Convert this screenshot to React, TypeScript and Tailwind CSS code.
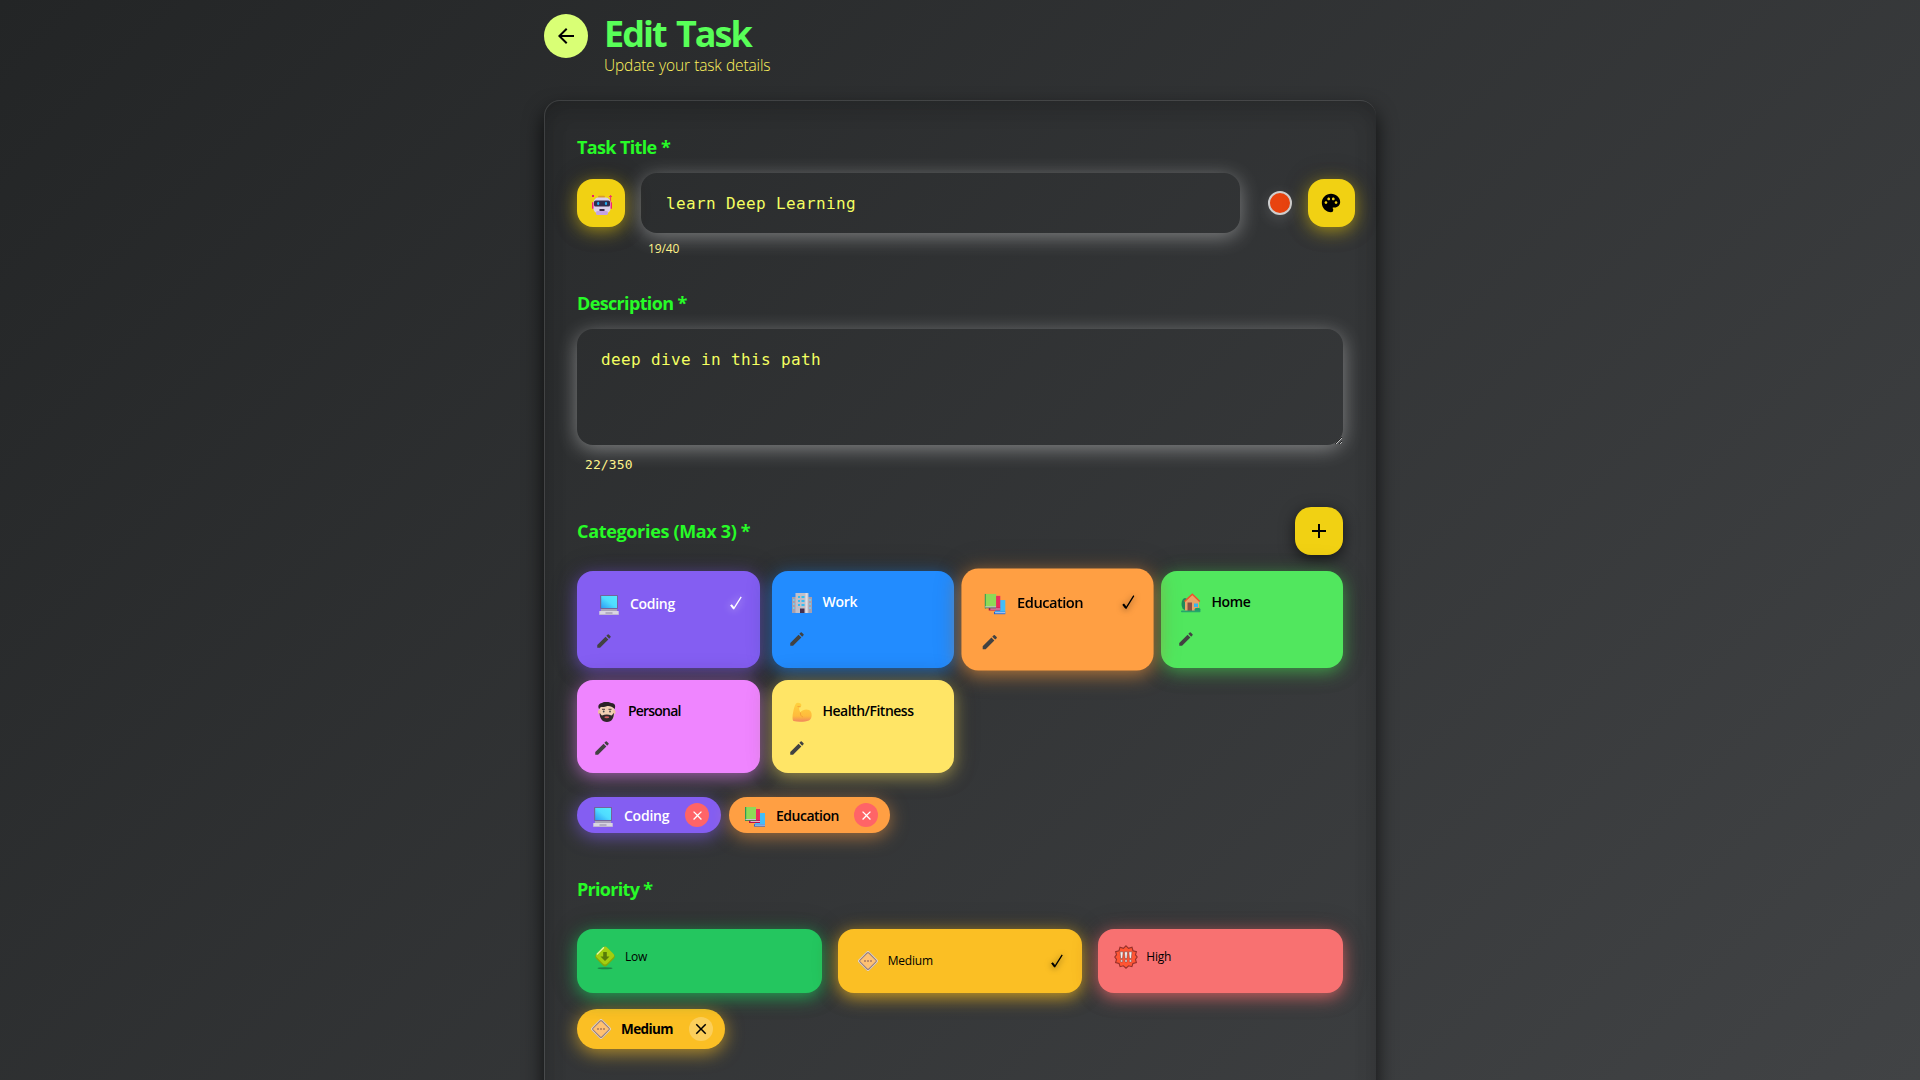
import React from "react";
import { MdAdd, MdArrowBack, MdClose, MdEdit, MdPalette } from "react-icons/md";

function Robot() {
  return (
    <svg width="20" height="20" viewBox="0 0 20 20">
      <rect x="0" y="0" width="2" height="2" fill="#f0186a" />
      <path d="M18.6 0v7M17 1.5h3" stroke="#f0386a" strokeWidth="1" />
      <rect x="0" y="7" width="2" height="7" rx="1" fill="#f5246e" />
      <rect x="18" y="7" width="2" height="7" rx="1" fill="#f5246e" />
      <rect x="6" y="0.8" width="7" height="2.2" rx="1" fill="#d99a2b" />
      <rect x="1.5" y="2.5" width="17" height="16" rx="5" fill="#dcd0ea" />
      <rect x="4" y="16" width="12" height="4" rx="1.6" fill="#c4a3e4" />
      <rect x="2" y="5.5" width="16" height="6" rx="1.6" fill="#322c4c" />
      <ellipse cx="6.2" cy="8.5" rx="1.1" ry="1.8" fill="#1fb0f5" />
      <ellipse cx="14" cy="8.5" rx="1.1" ry="1.8" fill="#1fb0f5" />
      <rect x="7.5" y="14" width="5" height="2" fill="#3a2b4a" />
    </svg>
  );
}

function Laptop() {
  return (
    <svg width="20" height="20" viewBox="0 0 20 20">
      <defs>
        <linearGradient id="screen" x1="1" y1="0" x2="0" y2="1">
          <stop offset="0" stopColor="#56e9ff" />
          <stop offset="0.5" stopColor="#4fdcff" />
          <stop offset="1" stopColor="#2b9cf5" />
        </linearGradient>
      </defs>
      <rect x="1" y="0" width="18" height="14" rx="0.8" fill="#73649a" />
      <rect x="2.2" y="1" width="15.8" height="12" fill="url(#screen)" />
      <path d="M2 14h16v2H2z" fill="#a9a3b8" />
      <rect x="0.3" y="16" width="19.4" height="4" rx="0.6" fill="#d9d5e2" />
      <path d="M6.5 18h7" stroke="#8d84a3" strokeWidth="1" />
      <path d="M0.5 19.8h19" stroke="#9a8fb2" strokeWidth="0.6" />
    </svg>
  );
}

function Office() {
  return (
    <svg width="20" height="20" viewBox="0 0 20 20">
      <rect x="0" y="4" width="20" height="16" fill="#a79fae" />
      <rect x="3.5" y="0" width="13" height="20" fill="#c3bfc8" />
      <rect x="13.5" y="0" width="2" height="20" fill="#e0dde4" />
      <path d="M6 3h2v2H6zM9.5 3h3v2h-3zM6 7h2v2H6zM9.5 7h3v2h-3zM6 11h2v2H6zM9.5 11h3v2h-3z" fill="#35bdf2" />
      <path d="M1 6h1.5v2H1zM1 10h1.5v2H1zM1 14h1.5v2H1zM17.3 6h1.5v2h-1.5zM17.3 10h1.5v2h-1.5zM17.3 14h1.5v2h-1.5z" fill="#6fd0f5" />
      <rect x="8" y="15.5" width="4.5" height="4.5" fill="#43304f" />
    </svg>
  );
}

function Books() {
  return (
    <svg width="20" height="20" viewBox="0 0 20 20">
      <rect x="10" y="6" width="10" height="12" fill="#43bdf8" />
      <path d="M9 17.2h11v2.4H9z" fill="#2466cf" />
      <path d="M10 17.6h10v1H10z" fill="#c9dcf7" />
      <rect x="6" y="2" width="9" height="11.5" fill="#ec2a5e" />
      <path d="M4 13.2h11V16H4z" fill="#b5114e" />
      <path d="M5.500 14h9.500v.9H5.500z" fill="#eec3d8" />
      <rect x="0.500" y="0" width="10.500" height="12.500" fill="#8fd957" />
      <path d="M0 0h1.200v14H0z" fill="#2f9a56" />
      <path d="M0.500 12.200H11v1H.5z" fill="#cfc9f4" />
      <path d="M0.500 13.100H11v.8H.5z" fill="#2f7f4c" />
    </svg>
  );
}

function House() {
  return (
    <svg width="20" height="20" viewBox="0 0 20 20">
      <ellipse cx="4" cy="11" rx="3.500" ry="6" fill="#1f8a5b" />
      <path d="M4 8 11.500 1.500 18 8v10H4z" fill="#e9a368" />
      <path d="M3.500 8.500 11.300 1.300l7.500 7.200" fill="none" stroke="#f0502c" strokeWidth="1.500" />
      <rect x="6.500" y="9.500" width="4.500" height="8.500" fill="#8b4f45" />
      <rect x="13" y="10.500" width="4" height="3.500" fill="#35b6f0" />
      <ellipse cx="16.500" cy="16.800" rx="3" ry="2" fill="#1f9c68" />
      <rect x="0" y="17.600" width="19.500" height="1.600" rx="0.800" fill="#25a56c" />
    </svg>
  );
}

function Beard() {
  return (
    <svg width="20" height="20" viewBox="0 0 20 20">
      <path d="M2 7C0 3 3 1 5 1c3-2 8-1 9 0 4 0 5 3 3.500 6z" fill="#2b2226" />
      <path d="M2.500 6.500C4 4 6 5.500 9 4.500s6 0 8.100 2V13c0 4-3 6-7 6s-7.100-2-7.100-6z" fill="#f2cfb4" />
      <rect x="1" y="8" width="2.500" height="4" rx="1.200" fill="#eebf9f" />
      <rect x="16.300" y="8" width="2.200" height="4" rx="1.100" fill="#eebf9f" />
      <path d="M2.600 11c1 .5 1.400 1.800 2.400 2.600 3-1.400 6.500-1.400 9.500 0 1-.8 1.500-2.100 2.400-2.600 0 5-1.900 8.800-7 9-5-.2-7.300-4-7.300-9z" fill="#30262b" />
      <path d="M5 7.300h3M11.500 7.300h3" stroke="#3b2a2c" strokeWidth="0.900" />
      <circle cx="6.700" cy="9.500" r="0.900" fill="#43464d" />
      <circle cx="13" cy="9.500" r="0.900" fill="#43464d" />
      <ellipse cx="9.800" cy="15.200" rx="2.400" ry="1" fill="#d15a5f" />
    </svg>
  );
}

function Biceps() {
  return (
    <svg width="20" height="20" viewBox="0 0 20 20">
      <defs>
        <linearGradient id="arm" x1="0" y1="0" x2="0" y2="1">
          <stop offset="0" stopColor="#ffd23e" />
          <stop offset="0.700" stopColor="#ffbb3c" />
          <stop offset="1" stopColor="#f0865e" />
        </linearGradient>
      </defs>
      <path d="M4 1.500C5 .3 7 .4 8.500 1.500c1.200 1 1 2.500.2 3.200l-1.400.5c-.5 2 .2 4 1.200 5C11 7 17 6.500 19 10c1.300 2.800.8 7-2 8.500-4 1.500-11 1.700-15.500.5C.3 18 .3 14 1 11c.7-4 1.600-7.500 3-9.500z" fill="url(#arm)" />
      <path d="M8.500 10.500c-.4 2 .5 4 2.500 4.500M5.500 4.500l3 .3" fill="none" stroke="#f39a35" strokeWidth="0.800" />
    </svg>
  );
}

function LowIcon() {
  return (
    <svg width="20" height="24" viewBox="0 0 20 24">
      <ellipse cx="10" cy="22.200" rx="7.500" ry="1" fill="#167a43" opacity="0.850" />
      <rect x="2.300" y="3" width="15.400" height="15.400" rx="3" transform="rotate(45 10 10.700)" fill="#82a80b" />
      <rect x="2.800" y="2.300" width="14.400" height="14.400" rx="3" transform="rotate(45 10 9.500)" fill="#a3ce10" />
      <path d="M2.300 8 8.500 1.800" stroke="#e8f7a0" strokeWidth="1.400" strokeLinecap="round" />
      <path d="M8.200 6h3.600v4.500h2.700L10 15.100l-4.500-4.600h2.700z" fill="#587c08" />
    </svg>
  );
}

function MediumIcon() {
  return (
    <svg width="22" height="22" viewBox="0 0 22 22">
      <rect x="3.300" y="3.500" width="15.400" height="15.400" rx="2.200" transform="rotate(45 11 11.200)" fill="#b98a35" opacity="0.500" />
      <rect x="3.300" y="3.300" width="15.400" height="15.400" rx="2.200" transform="rotate(45 11 11)" fill="#e6dad4" />
      <rect x="4.700" y="4.700" width="12.600" height="12.600" rx="1.300" transform="rotate(45 11 11)" fill="#ffc172" stroke="#98817f" strokeWidth="1.100" />
      <path d="M7 10h2v2H7zM10 10h2v2h-2zM13 10h2v2h-2z" fill="#c18b62" />
    </svg>
  );
}

function HighIcon() {
  return (
    <svg width="24" height="24" viewBox="0 0 24 24">
      <path d="M12 .8l2.600 2.500 3.400-1 1 3.400 3.400 1-.9 3.100 1.700 2.200-1.700 2.300.9 3.200-3.500 1-1 3.200-3.300-.9L12 23.200l-2.600-2.400-3.300.9-1-3.200-3.500-1 .9-3.200L.8 12l1.700-2.200-.9-3.100 3.400-1 1-3.400 3.400 1z" fill="#ff5533" stroke="#97302a" strokeWidth="1.100" />
      <path d="M6 6.800h3.200l-.7 6.700H6.700zM10.400 6.800h3.200l-.7 6.700h-1.800zM14.800 6.800H18l-.7 6.700h-1.800z" fill="#f3efee" stroke="#703b3a" strokeWidth="0.500" />
      <path d="M6.600 14.800h2v2.200h-2zM11 14.800h2v2.200h-2zM15.400 14.800h2v2.200h-2z" fill="#e9e2e2" stroke="#703b3a" strokeWidth="0.400" />
    </svg>
  );
}

function Check({ className }: { className: string }) {
  return (
    <svg width="12" height="14" viewBox="0 0 12 14" className={className} fill="none" stroke="currentColor">
      <path d="M1 9.200 3.800 12.600 11.200 0.800" strokeWidth="1.300" />
      <path d="M1 8.800 3.800 12.400" strokeWidth="2" />
    </svg>
  );
}

function Label({ children, tracking }: { children: React.ReactNode; tracking: string }) {
  return (
    <div className={`flex h-7 items-center whitespace-nowrap text-[18px] font-bold text-[#27fb27] ${tracking}`}>
      {children}
    </div>
  );
}

type Category = {
  name: string;
  icon: React.ReactNode;
  tone: string;
  tracking: string;
  selected?: boolean;
  check?: string;
};

const categories: Category[] = [
  { name: "Coding", icon: <Laptop />, tracking: "tracking-[-0.3px]", selected: true, check: "text-white drop-shadow-[0_0_4px_rgba(255,255,255,0.7)]", tone: "bg-[#845ef2] text-white shadow-[0_4px_18px_rgba(132,94,242,0.65),0_0_26px_rgba(0,0,0,0.25)]" },
  { name: "Work", icon: <Office />, tracking: "tracking-[-0.3px]", tone: "bg-[#228cff] text-white shadow-[0_4px_18px_rgba(34,140,255,0.65),0_0_26px_rgba(0,0,0,0.25)]" },
  { name: "Education", icon: <Books />, tracking: "tracking-[-0.5px]", selected: true, check: "text-black drop-shadow-[0_1px_3px_rgba(0,0,0,0.6)]", tone: "z-10 scale-105 bg-[#ff9f43] text-black shadow-[0_4px_18px_rgba(255,159,67,0.65),0_0_26px_rgba(0,0,0,0.25)]" },
  { name: "Home", icon: <House />, tracking: "tracking-[-0.4px]", tone: "bg-[#51e75e] text-black shadow-[0_4px_18px_rgba(81,231,94,0.6),0_0_26px_rgba(0,0,0,0.25)]" },
  { name: "Personal", icon: <Beard />, tracking: "tracking-[-0.8px]", tone: "bg-[#ef85ff] text-black shadow-[0_4px_18px_rgba(239,133,255,0.6),0_0_26px_rgba(0,0,0,0.25)]" },
  { name: "Health/Fitness", icon: <Biceps />, tracking: "tracking-[-0.5px]", tone: "bg-[#ffe566] text-black shadow-[0_4px_18px_rgba(255,229,102,0.55),0_0_26px_rgba(0,0,0,0.25)]" },
];

function CategoryCard({ name, icon, tone, tracking, selected, check }: Category) {
  return (
    <div className={`rounded-2xl ${tone} ${selected ? "p-[2px]" : ""}`}>
      <div className="flex flex-col pl-[18px] pt-5">
        <div className="flex h-5 items-center">
          <span className="mt-1 flex w-6 justify-center">{icon}</span>
          <span className={`ml-[9px] text-[14px] font-semibold ${tracking}`}>{name}</span>
          {check && <Check className={`ml-auto mr-4 ${check}`} />}
        </div>
        <MdEdit className="-ml-[2px] mt-[19px] text-[#424242]" size={18} />
      </div>
    </div>
  );
}

function Chip({ name, icon, tone, tracking }: Category) {
  return (
    <div className={`flex h-9 items-center rounded-full pl-4 pr-3 ${tone}`}>
      <span className="mt-[3px] w-5 shrink-0">{icon}</span>
      <span className={`ml-[11px] text-[14px] font-semibold ${tracking}`}>{name}</span>
      <span className="ml-auto flex size-6 shrink-0 items-center justify-center rounded-full bg-[#ff6467] text-white">
        <MdClose size={15} />
      </span>
    </div>
  );
}

export default function App() {
  return (
    <div className="h-[1080px] w-full overflow-hidden bg-[linear-gradient(135deg,#232526,#414345)] font-['Open_Sans','Noto_Sans',sans-serif]">
      <div className="mx-auto w-[832px]">
        <header className="flex h-[100px] items-start pt-[14px]">
          <button className="flex size-11 items-center justify-center rounded-full bg-[#d9ff75] text-black">
            <MdArrowBack size={24} />
          </button>
          <div className="ml-4 flex flex-col whitespace-nowrap">
            <h1 className="-mt-px h-[41px] text-[36px] font-bold leading-[42px] tracking-[-2px] text-[#58ff58] [word-spacing:3px]">Edit Task</h1>
            <p className="h-5 text-[15.5px] font-light leading-[22px] tracking-[-0.15px] text-[#fff35e] [word-spacing:0.5px]">Update your task details</p>
          </div>
        </header>

        <main className="h-[1200px] rounded-2xl border-l border-t border-white/10 pl-8 pr-[33px] pt-8 shadow-[0_10px_20px_rgba(0,0,0,0.75),inset_0_0_24px_rgba(0,0,0,0.1),inset_0_10px_20px_rgba(0,0,0,0.12)]">
          <Label tracking="tracking-[-0.7px] [word-spacing:0.5px]">Task Title *</Label>
          <div className="-mr-4 mt-3 flex h-[60px] items-center">
            <button className="flex size-12 items-center justify-center rounded-2xl bg-[#f1d113] pl-[2px] pt-1 shadow-[0_4px_18px_rgba(241,209,19,0.6),0_0_26px_rgba(0,0,0,0.25)]">
              <Robot />
            </button>
            <div className="ml-4 flex h-full w-[599px] items-center rounded-2xl px-[25px] pt-px font-['DejaVu_Sans_Mono',monospace] text-[16px] tracking-[0.37px] text-[#f4ff61] shadow-[0_4px_20px_rgba(255,255,255,0.38)]">
              learn Deep Learning
            </div>
            <span className="ml-7 size-6 rounded-full border-2 border-[#cfcfcf] bg-[#e8430f] shadow-[0_4px_15px_rgba(255,255,255,0.15)]" />
            <button className="ml-4 flex h-12 w-[47px] items-center justify-center rounded-2xl bg-[#f1d113] pr-px text-black shadow-[0_4px_18px_rgba(241,209,19,0.6),0_0_26px_rgba(0,0,0,0.25)]">
              <MdPalette size={22} />
            </button>
          </div>
          <div className="mt-[6px] h-5 pl-[71px] text-[12px] leading-5 tracking-[-0.15px] text-[#fff38a]">19/40</div>

          <div className="mt-[30px]">
            <Label tracking="tracking-[-0.65px]">Description *</Label>
          </div>
          <textarea
            readOnly
            value="deep dive in this path"
            className="mt-3 block h-[116px] w-full rounded-2xl px-6 pt-[19px] font-['DejaVu_Sans_Mono',monospace] text-[16px] tracking-[0.37px] text-[#f4ff61] shadow-[0_4px_20px_rgba(255,255,255,0.4)] outline-none"
          />
          <div className="mt-[10px] h-5 pl-2 font-['DejaVu_Sans_Mono',monospace] text-[13px] leading-5 tracking-[0.1px] text-[#fff38a]">22/350</div>

          <div className="mt-8 flex h-12 items-center justify-between">
            <Label tracking="tracking-[-0.33px]">Categories (Max 3) *</Label>
            <button className="flex size-12 items-center justify-center rounded-2xl bg-[#f1d113] text-black shadow-[0_4px_15px_rgba(0,0,0,0.6)]">
              <MdAdd size={24} />
            </button>
          </div>
          <div className="mt-4 grid grid-cols-4 grid-rows-[97px_93px] gap-3">
            {categories.map((c) => (
              <CategoryCard key={c.name} {...c} />
            ))}
          </div>
          <div className="mt-6 flex gap-2">
            <Chip name="Coding" icon={<Laptop />} tracking="tracking-[-0.25px]" tone="w-36 bg-[#845ef2] text-white shadow-[0_4px_18px_rgba(132,94,242,0.6)]" />
            <Chip name="Education" icon={<Books />} tracking="tracking-[-0.5px]" tone="w-[161px] bg-[#ff9f43] text-black shadow-[0_4px_18px_rgba(255,159,67,0.55)]" />
          </div>

          <div className="mt-[42px]">
            <Label tracking="tracking-[-0.7px]">Priority *</Label>
          </div>
          <div className="mt-[26px] grid h-16 grid-cols-3 gap-4 text-[12px] tracking-[-0.2px] text-black">
            <div className="flex items-start rounded-2xl bg-[#24c65f] pl-[18px] pt-[17px] shadow-[0_4px_18px_rgba(36,198,95,0.8),0_0_26px_rgba(0,0,0,0.25)]">
              <LowIcon />
              <span className="ml-[10px] leading-[22px]">Low</span>
            </div>
            <div className="flex items-center rounded-2xl bg-[#fbbf24] pl-[19px] pr-[19px] shadow-[0_4px_18px_rgba(251,191,36,0.8),0_0_26px_rgba(0,0,0,0.25)]">
              <MediumIcon />
              <span className="ml-[9px]">Medium</span>
              <Check className="ml-auto text-black drop-shadow-[0_1px_3px_rgba(0,0,0,0.6)]" />
            </div>
            <div className="flex items-start rounded-2xl bg-[#f87171] pl-4 pt-4 shadow-[0_4px_18px_rgba(248,113,113,0.8),0_0_26px_rgba(0,0,0,0.25)]">
              <HighIcon />
              <span className="ml-2 leading-6">High</span>
            </div>
          </div>
          <div className="mt-4 flex h-10 w-[148px] items-center rounded-full bg-[#fbbf24] pl-[13px] pr-3 text-black shadow-[0_4px_18px_rgba(251,191,36,0.65)]">
            <MediumIcon />
            <span className="ml-[9px] text-[13.500px] font-bold tracking-[-0.6px]">Medium</span>
            <span className="ml-auto flex size-6 items-center justify-center rounded-full bg-white/25">
              <MdClose size={18} />
            </span>
          </div>
        </main>
      </div>
    </div>
  );
}
